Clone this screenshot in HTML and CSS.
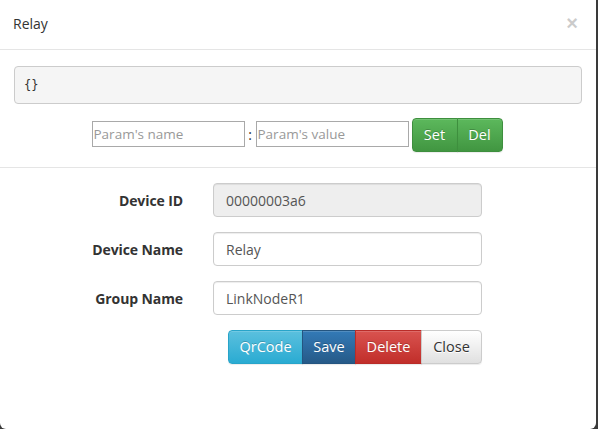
FILE: index.html
```html
<!DOCTYPE html>
<html>
<head>
<meta charset="utf-8">
<link rel="stylesheet" href="styles.css">
</head>
<body>
<div class="modal">
  <div class="modal-header">
    <span class="modal-title">Relay</span>
    <span class="close">&times;</span>
  </div>
  <div class="modal-body">
    <pre class="json">{}</pre>
    <div class="param-row">
      <input class="param-input" type="text" placeholder="Param's name">
      <span class="colon">:</span>
      <input class="param-input" type="text" placeholder="Param's value">
      <div class="btn-group">
        <button class="btn btn-success">Set</button>
        <button class="btn btn-success">Del</button>
      </div>
    </div>
  </div>
  <div class="form">
    <div class="form-group">
      <label class="form-label">Device ID</label>
      <input class="form-control" type="text" value="00000003a6" disabled>
    </div>
    <div class="form-group">
      <label class="form-label">Device Name</label>
      <input class="form-control" type="text" value="Relay">
    </div>
    <div class="form-group">
      <label class="form-label">Group Name</label>
      <input class="form-control" type="text" value="LinkNodeR1">
    </div>
    <div class="form-group">
      <span class="form-label"></span>
      <div class="actions">
        <div class="btn-group">
          <button class="btn btn-info btn-qr">QrCode</button>
          <button class="btn btn-primary btn-save">Save</button>
          <button class="btn btn-danger btn-delete">Delete</button>
          <button class="btn btn-default btn-close">Close</button>
        </div>
      </div>
    </div>
  </div>
</div>
</body>
</html>
```
FILE: styles.css
```css
* { box-sizing: border-box; }
html, body { margin: 0; padding: 0; }
body {
  width: 598px;
  height: 429px;
  overflow: hidden;
  background: #3a3a3a;
  font-family: "Open Sans", "Noto Sans", sans-serif;
  font-size: 14px;
  color: #333;
}
.modal {
  width: 596px;
  height: 429px;
  background: #fff;
  border-radius: 0 0 6px 6px;
}
.modal-header {
  height: 50px;
  border-bottom: 1px solid #e5e5e5;
  padding: 0 18px 0 13px;
  display: flex;
  align-items: center;
  justify-content: space-between;
}
.modal-title {
  font-size: 14px;
  line-height: 20px;
  color: #333;
  margin-top: -2px;
}
.close {
  font-size: 20px;
  font-weight: bold;
  color: #000;
  opacity: 0.2;
  line-height: 20px;
  margin-top: -4px;
  font-family: "Liberation Sans", sans-serif;
}
.modal-body {
  padding: 16px 14px 15px 14px;
  border-bottom: 1px solid #e5e5e5;
}
.json {
  margin: 0;
  height: 38px;
  padding: 0 9px;
  display: flex;
  align-items: center;
  background: #f5f5f5;
  border: 1px solid #ccc;
  border-radius: 4px;
  font-family: "DejaVu Sans Mono", "Liberation Mono", monospace;
  font-size: 12px;
  color: #333;
}
.param-row {
  margin-top: 14px;
  display: flex;
  justify-content: center;
  align-items: center;
  padding-right: 2px;
}
.param-input {
  width: 153px;
  height: 26px;
  margin-top: -2px;
  border: 1px solid #a9a9a9;
  padding: 0 1px;
  font-family: "Open Sans", "Noto Sans", sans-serif;
  font-size: 13.5px;
  color: #333;
  outline: none;
}
.param-input::placeholder { color: #999; }
.colon {
  width: 11px;
  text-align: center;
  font-size: 14px;
  margin-top: -2px;
}
.param-row .btn-group { margin-left: 3px; }
.btn-group { display: flex; }
.btn {
  height: 34px;
  padding: 0 12px;
  font-family: "Open Sans", "Noto Sans", sans-serif;
  font-size: 14.5px;
  line-height: 32px;
  border: 1px solid transparent;
  border-radius: 0;
  color: #fff;
  text-shadow: 0 -1px 0 rgba(0,0,0,.2);
  box-shadow: inset 0 1px 0 rgba(255,255,255,.15), 0 1px 1px rgba(0,0,0,.075);
  cursor: pointer;
}
.btn-group .btn:first-child { border-radius: 4px 0 0 4px; }
.btn-group .btn:last-child { border-radius: 0 4px 4px 0; }
.btn-group .btn + .btn { margin-left: -1px; }
.btn-success {
  width: 46px;
  padding: 0;
  background: linear-gradient(to bottom, #5cb85c 0, #419641 100%);
  border-color: #3e8f3e;
}
.form {
  padding-top: 15px;
}
.form-group {
  display: flex;
  align-items: center;
  margin-bottom: 15px;
  height: 34px;
}
.form-label {
  width: 183px;
  text-align: right;
  font-weight: bold;
  font-size: 14px;
  letter-spacing: -0.1px;
  color: #333;
  margin-right: 30px;
}
.form-control {
  width: 269px;
  height: 34px;
  padding: 6px 12px;
  border: 1px solid #ccc;
  border-radius: 4px;
  font-family: "Open Sans", "Noto Sans", sans-serif;
  font-size: 14px;
  color: #555;
  background: #fff;
  box-shadow: inset 0 1px 1px rgba(0,0,0,.075);
}
.form-control:disabled { background: #eee; }
.actions {
  width: 269px;
  display: flex;
  justify-content: flex-end;
}
.btn-qr { width: 75px; padding: 0; }
.btn-save { width: 54px; padding: 0; }
.btn-delete { width: 67px; padding: 0; }
.btn-close { width: 61px; padding: 0; }
.btn-info {
  background: linear-gradient(to bottom, #5bc0de 0, #2aabd2 100%);
  border-color: #28a4c9;
}
.btn-primary {
  background: linear-gradient(to bottom, #337ab7 0, #265a88 100%);
  border-color: #245580;
}
.btn-danger {
  background: linear-gradient(to bottom, #d9534f 0, #c12e2a 100%);
  border-color: #b92c28;
}
.btn-default {
  color: #333;
  text-shadow: 0 1px 0 #fff;
  background: linear-gradient(to bottom, #fff 0, #e0e0e0 100%);
  border-color: #ccc;
}
```
